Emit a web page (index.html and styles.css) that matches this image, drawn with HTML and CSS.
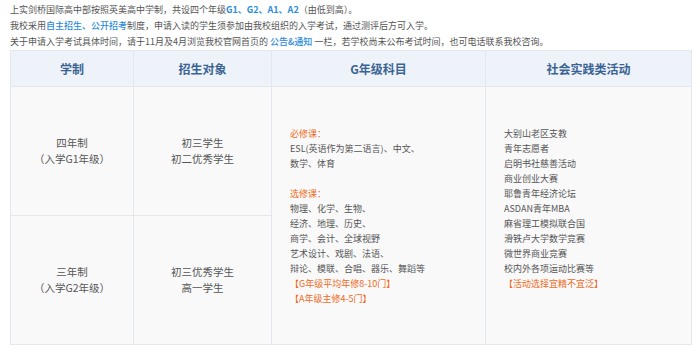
FILE: index.html
```html
<!DOCTYPE html>
<html lang="zh-CN">
<head>
<meta charset="utf-8">
<title>招生</title>
<link rel="stylesheet" href="styles.css">
</head>
<body>
<div class="intro">
  <p>上实剑桥国际高中部按照英美高中学制，共设四个年级<b class="blue">G1、G2、A1、A2</b>（由低到高）。</p>
  <p>我校采用<span class="blue mid">自主招生、公开招考</span>制度，申请入读的学生须参加由我校组织的入学考试，通过测评后方可入学。</p>
  <p>关于申请入学考试具体时间，请于11月及4月浏览我校官网首页的 <span class="blue mid">公告&amp;通知</span> 一栏，若学校尚未公布考试时间，也可电话联系我校咨询。</p>
</div>
<table class="grid">
  <thead>
    <tr>
      <th class="c1">学制</th>
      <th class="c2">招生对象</th>
      <th class="c3">G年级科目</th>
      <th class="c4">社会实践类活动</th>
    </tr>
  </thead>
  <tbody>
    <tr>
      <td class="center">四年制<br>（入学G1年级）</td>
      <td class="center">初三学生<br>初二优秀学生</td>
      <td class="list" rowspan="2">
        <span class="orange">必修课：</span><br>
        ESL(英语作为第二语言)、中文、<br>
        数学、体育<br>
        <br>
        <span class="orange">选修课：</span><br>
        物理、化学、生物、<br>
        经济、地理、历史、<br>
        商学、会计、全球视野<br>
        艺术设计、戏剧、法语、<br>
        辩论、模联、合唱、器乐、舞蹈等<br>
        <span class="orange">【G年级平均年修8-10门】</span><br>
        <span class="orange">【A年级主修4-5门】</span>
      </td>
      <td class="list" rowspan="2">
        大别山老区支教<br>
        青年志愿者<br>
        启明书社慈善活动<br>
        商业创业大赛<br>
        耶鲁青年经济论坛<br>
        ASDAN青年MBA<br>
        麻省理工模拟联合国<br>
        滑铁卢大学数学竞赛<br>
        微世界商业竞赛<br>
        校内外各项运动比赛等<br>
        <span class="orange">【活动选择宜精不宜泛】</span><br>
        &nbsp;
      </td>
    </tr>
    <tr>
      <td class="center">三年制<br>（入学G2年级）</td>
      <td class="center">初三优秀学生<br>高一学生</td>
    </tr>
  </tbody>
</table>
</body>
</html>
```

FILE: styles.css
```css
html, body {
  margin: 0;
  padding: 0;
  background: #ffffff;
}
body {
  padding: 2px 10px 0 10px;
  font-family: "Noto Sans CJK SC", "Noto Sans", sans-serif;
  color: #555555;
}
.intro p {
  margin: 0;
  font-size: 9px;
  line-height: 16px;
  white-space: nowrap;
}
.blue {
  color: #2a8bd9;
}
.mid {
  font-weight: 500;
}
b.blue {
  font-weight: 700;
}
.orange {
  color: #ef6a22;
}
.grid {
  width: 680px;
  border-collapse: collapse;
  table-layout: fixed;
  background: #f9f9fa;
}
.grid th, .grid td {
  border: 1px solid #e3e8f0;
  padding: 0;
}
.grid th {
  height: 35px;
  background: #eef3f9;
  color: #3a6493;
  font-size: 12px;
  font-weight: 700;
  text-align: center;
}
.c1 { width: 122px; }
.c2 { width: 137px; }
.c3 { width: 213px; }
.c4 { width: 205px; }
.grid td.center {
  height: 128px;
  text-align: center;
  vertical-align: middle;
  font-size: 10.5px;
  line-height: 16px;
}
.grid td.list {
  vertical-align: middle;
  padding-left: 18px;
  font-size: 9px;
  line-height: 15px;
  white-space: nowrap;
}
```
